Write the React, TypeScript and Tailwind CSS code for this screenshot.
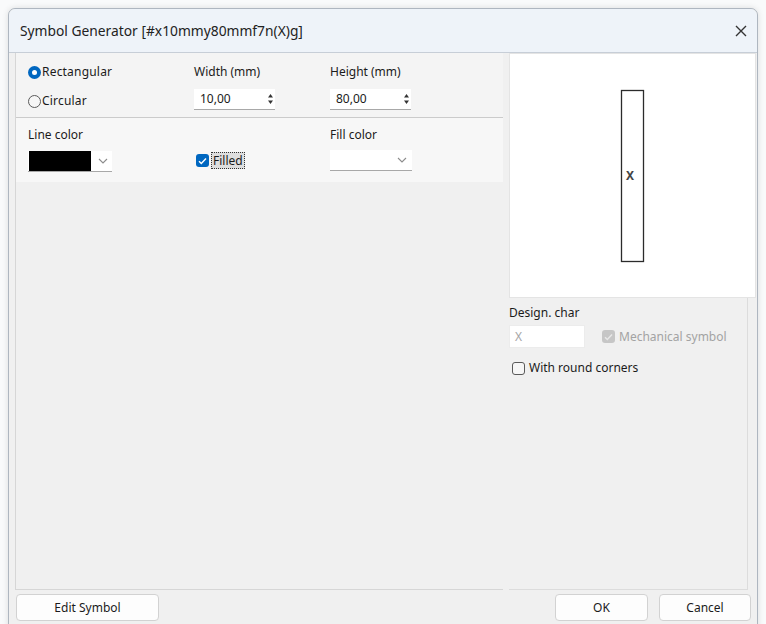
import React from "react";

function Chevron() {
  return (
    <svg width="10" height="6" viewBox="0 0 10 6" fill="none">
      <path d="M1 1l4 4 4-4" stroke="#8c8c8c" strokeWidth="1.1" />
    </svg>
  );
}

function Spinner() {
  return (
    <svg width="7" height="12" viewBox="0 0 7 12">
      <path d="M3.5 1L6 4.5H1z" fill="#333" />
      <path d="M3.5 11L6 7.5H1z" fill="#333" />
    </svg>
  );
}

function Radio({ checked, label }: { checked?: boolean; label: string }) {
  return (
    <div className="flex h-4 items-center gap-[1px]">
      {checked ? (
        <span className="flex h-[13px] w-[13px] items-center justify-center rounded-full bg-[#0067c0]">
          <span className="h-[5px] w-[5px] rounded-full bg-white" />
        </span>
      ) : (
        <span className="h-[13px] w-[13px] rounded-full border border-[#5a5a5a] bg-[#f6f6f6]" />
      )}
      <span className="tracking-[0.2px]">{label}</span>
    </div>
  );
}

function SpinBox({ value }: { value: string }) {
  return (
    <div className="mt-[9px] flex h-[21px] w-[81px] items-center justify-between border-b border-[#a8a8a8] bg-white pl-[6px] pr-[1px]">
      <span>{value}</span>
      <Spinner />
    </div>
  );
}

function CheckMark({ color }: { color: string }) {
  return (
    <svg width="9" height="8" viewBox="0 0 9 8" fill="none">
      <path d="M1 4.2l2.3 2.3L8 1.5" stroke={color} strokeWidth="1.4" />
    </svg>
  );
}

export default function App() {
  return (
    <div className="h-[624px] w-[766px] overflow-hidden bg-[#f9fafb] pl-2 pt-2 font-['Noto_Sans',sans-serif] text-[12px] leading-4 text-[#1b1b1b]">
      <div className="flex h-[630px] w-[750px] flex-col rounded-t-[7px] border border-[#aeb6c0] bg-[#f0f0f0] shadow-[0_0_6px_rgba(0,0,0,0.12)]">
        {/* title bar */}
        <div className="flex h-[44px] shrink-0 items-center justify-between rounded-t-[7px] border-b border-[#c7ced7] bg-[#eef3f9] pl-[11px] pr-[10px]">
          <span className="text-[13.8px] text-[#222]">Symbol Generator [#x10mmy80mmf7n(X)g]</span>
          <svg width="12" height="12" viewBox="0 0 12 12">
            <path d="M1 1l10 10M11 1L1 11" stroke="#333" strokeWidth="1.4" />
          </svg>
        </div>

        {/* body */}
        <div className="flex h-[537px] shrink-0 gap-[6px] pl-[6px]">
          {/* settings */}
          <div className="flex w-[488px] flex-col border-b border-l border-[#d6d6d6]">
            <div className="flex h-[65px] shrink-0 border-b border-[#cbcbcb] bg-[#f4f4f4] pl-[12px] pt-[11px]">
              <div className="flex w-[166px] flex-col gap-[13px]">
                <Radio checked label="Rectangular" />
                <Radio label="Circular" />
              </div>
              <div className="w-[136px]">
                <div className="h-4">Width (mm)</div>
                <SpinBox value="10,00" />
              </div>
              <div>
                <div className="h-4">Height (mm)</div>
                <SpinBox value="80,00" />
              </div>
            </div>

            <div className="flex h-[64px] shrink-0 bg-[#f7f7f7] pl-[12px] pt-[9px]">
              <div className="w-[166px]">
                <div className="h-4">Line color</div>
                <div className="mt-[8px] flex h-[21px] w-[84px] items-center border-b border-[#a8a8a8] bg-white">
                  <span className="ml-[1px] h-[20px] w-[62px] bg-black" />
                  <span className="ml-[7px]">
                    <Chevron />
                  </span>
                </div>
              </div>
              <div className="w-[136px] pl-[2px] pt-[24px]">
                <div className="flex h-[19px] items-center gap-[2px]">
                  <span className="flex h-[13px] w-[13px] items-center justify-center rounded-[3px] bg-[#0067c0]">
                    <CheckMark color="#fff" />
                  </span>
                  <span className="border border-dotted border-[#333] bg-[#dedede] px-[1px] leading-[15px]">Filled</span>
                </div>
              </div>
              <div>
                <div className="h-4">Fill color</div>
                <div className="mt-[7px] flex h-[21px] w-[82px] items-center justify-end border-b border-[#a8a8a8] bg-white pr-[5px]">
                  <Chevron />
                </div>
              </div>
            </div>

            <div className="flex-1" />
          </div>

          {/* preview and options */}
          <div className="flex w-[247px] flex-col">
            <div className="h-[245px] shrink-0 border border-[#e4e4e4] bg-white">
              <svg width="245" height="243" viewBox="0 0 245 243">
                <rect x="111.5" y="36.5" width="22" height="171" fill="none" stroke="#2b2b2b" strokeWidth="1.3" />
                <text x="120" y="126" fontSize="12" fontWeight="bold" fontFamily="Noto Sans, sans-serif" fill="#444" textAnchor="middle">
                  X
                </text>
              </svg>
            </div>
            <div className="mr-[8px] flex flex-1 flex-col border-b border-r border-[#dcdcdc]">
              <div className="mt-[7px] h-4">Design. char</div>
              <div className="mt-[4px] flex items-center">
                <div className="flex h-[23px] w-[76px] items-center border border-[#ececec] bg-white pl-[5px] text-[#a6a6a6]">
                  X
                </div>
                <div className="ml-[17px] flex items-center gap-[4px] text-[#a3a3a3]">
                  <span className="flex h-[13px] w-[13px] items-center justify-center rounded-[3px] bg-[#c6c6c6]">
                    <CheckMark color="#e8e8e8" />
                  </span>
                  <span>Mechanical symbol</span>
                </div>
              </div>
              <div className="mt-[12px] flex h-4 items-center gap-[4px] pl-[3px]">
                <span className="h-[13px] w-[13px] rounded-[3px] border border-[#5a5a5a] bg-[#f6f6f6]" />
                <span>With round corners</span>
              </div>
            </div>
          </div>
        </div>

        {/* footer buttons */}
        <div className="flex shrink-0 items-start pl-[7px] pr-[6px] pt-[4px]">
          <button className="h-[27px] w-[143px] rounded-[4px] border border-[#d2d2d2] bg-[#fdfdfd] text-[12px]">
            Edit Symbol
          </button>
          <div className="ml-auto flex gap-[11px]">
            <button className="h-[27px] w-[93px] rounded-[4px] border border-[#d2d2d2] bg-[#fdfdfd] text-[12px]">
              OK
            </button>
            <button className="h-[27px] w-[92px] rounded-[4px] border border-[#d2d2d2] bg-[#fdfdfd] text-[12px]">
              Cancel
            </button>
          </div>
        </div>
      </div>
    </div>
  );
}
